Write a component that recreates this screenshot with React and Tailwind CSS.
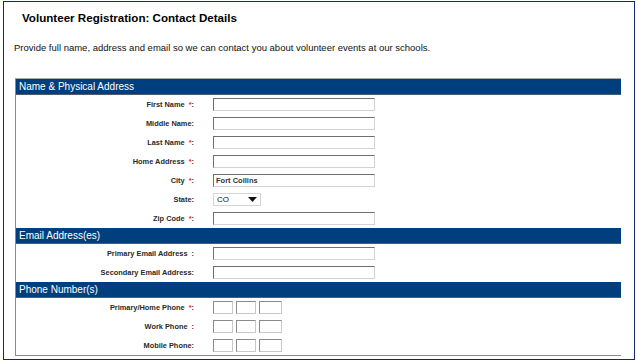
const sections = [
  {
    title: 'Name & Physical Address',
    rows: [
      { label: 'First Name', req: true, kind: 'text' },
      { label: 'Middle Name', kind: 'text' },
      { label: 'Last Name', req: true, kind: 'text' },
      { label: 'Home Address', req: true, kind: 'text' },
      { label: 'City', req: true, kind: 'text', value: 'Fort Collins' },
      { label: 'State', kind: 'select', value: 'CO' },
      { label: 'Zip Code', req: true, kind: 'text' },
    ],
  },
  {
    title: 'Email Address(es)',
    rows: [
      { label: 'Primary Email Address', spaced: true, kind: 'text' },
      { label: 'Secondary Email Address', kind: 'text' },
    ],
  },
  {
    title: 'Phone Number(s)',
    rows: [
      { label: 'Primary/Home Phone', req: true, kind: 'phone' },
      { label: 'Work Phone', spaced: true, kind: 'phone' },
      { label: 'Mobile Phone', kind: 'phone' },
    ],
  },
];

function Field({ row }) {
  if (row.kind === 'select') {
    return (
      <div className="flex h-[13px] w-[48px] items-center justify-between border border-[#d6d6d6] bg-white pl-[3px] pr-[3px] text-[8px] text-[#111]">
        <span>{row.value}</span>
        <svg width="9" height="5" viewBox="0 0 9 5">
          <path d="M0 0h9L4.5 5z" fill="#111" />
        </svg>
      </div>
    );
  }
  if (row.kind === 'phone') {
    return (
      <div className="flex gap-[3px]">
        {[20, 20, 23].map((w, i) => (
          <div
            key={i}
            style={{ width: w }}
            className="h-[13px] border border-[#c8c8c8] border-t-[#8a8a8a] border-l-[#8a8a8a] bg-white"
          />
        ))}
      </div>
    );
  }
  return (
    <div className="flex h-[13px] w-[162px] items-center border border-[#d2d2d2] border-t-[#6f6f6f] border-l-[#6f6f6f] bg-white pl-[2px] text-[7.5px] font-bold text-[#333]">
      {row.value}
    </div>
  );
}

export default function App() {
  return (
    <div className="h-[364px] w-[638px] bg-white font-['Liberation_Sans',Arial,sans-serif] text-black">
      <div className="ml-[3px] mt-[1px] h-[359px] w-[632px] border border-[#14286a]">
        {/* Title */}
        <div className="flex h-[32px] items-center pl-[18px] text-[11.6px] font-bold">
          Volunteer Registration: Contact Details
        </div>

        {/* Intro */}
        <div className="flex h-[28px] items-center pl-[10px] text-[9.5px] text-[#111]">
          Provide full name, address and email so we can contact you about volunteer events at our schools.
        </div>

        {/* Form table */}
        <div className="ml-[11px] mt-[16px] w-[606px] border-b border-l border-t border-b-[#8c8c8c] border-l-[#8c8c8c] border-t-[#a8a8a8]">
          {sections.map((s) => (
            <div key={s.title}>
              <div className="flex h-[16px] items-center border-b border-t border-b-[#4e5c6e] border-t-[#5f7fa8] bg-[#003f7e] pl-[3px] text-[10px] text-white first:border-t-0">
                {s.title}
              </div>
              {s.rows.map((r) => (
                <div key={r.label} className="flex h-[19px] items-center">
                  <div className="w-[178px] pt-[1px] text-right text-[7.4px] font-bold text-[#2a2a2a]">
                    {r.label}
                    {r.req && <span className="ml-[4px] text-[#f02020]">*</span>}
                    {r.spaced && <span className="ml-[4px]" />}:
                  </div>
                  <div className="ml-[19px]">
                    <Field row={r} />
                  </div>
                </div>
              ))}
            </div>
          ))}
        </div>
      </div>
    </div>
  );
}
